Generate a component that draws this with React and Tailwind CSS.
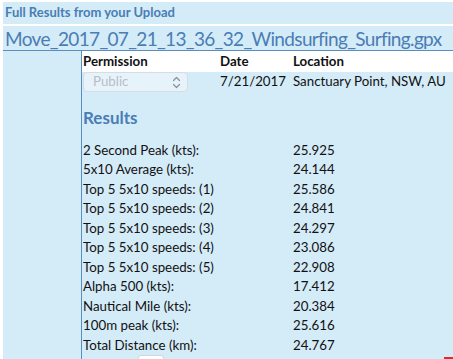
import React from 'react';

const results = [
    ['2 Second Peak (kts):', '25.925'],
    ['5x10 Average (kts):', '24.144'],
    ['Top 5 5x10 speeds: (1)', '25.586'],
    ['Top 5 5x10 speeds: (2)', '24.841'],
    ['Top 5 5x10 speeds: (3)', '24.297'],
    ['Top 5 5x10 speeds: (4)', '23.086'],
    ['Top 5 5x10 speeds: (5)', '22.908'],
    ['Alpha 500 (kts):', '17.412'],
    ['Nautical Mile (kts):', '20.384'],
    ['100m peak (kts):', '25.616'],
    ['Total Distance (km):', '24.767'],
];

function Chevrons() {
    return (
        <svg width="9" height="13" viewBox="0 0 9 13" fill="none" stroke="#8a8f95" strokeWidth="1.2" strokeLinecap="round" strokeLinejoin="round">
            <path d="M1.5 4.5 L4.5 1.5 L7.5 4.5" />
            <path d="M1.5 8.5 L4.5 11.5 L7.5 8.5" />
        </svg>
    );
}

export default function App() {
    return (
        <div className="w-[453px] h-[359px] overflow-hidden bg-white pt-[2px] pl-[3px] font-['Lato','Liberation_Sans',sans-serif] text-[13.3px] text-[#111]">
            <div className="h-[22px] bg-[#d4ebf8] pl-[2px] flex items-center text-[13px] font-bold text-[#4a7db4]">
                Full Results from your Upload
            </div>
            <div className="mt-[2px] h-[25px] bg-[#d4ebf8] border-b border-[#5a8dc2] pl-[2px] flex items-center text-[19px] tracking-[-0.65px] leading-none text-[#4a7db4] whitespace-nowrap">
                Move_2017_07_21_13_36_32_Windsurfing_Surfing.gpx
            </div>
            <div className="flex bg-[#d4ebf8] h-[320px]">
                <div className="w-[78px] shrink-0" />
                <div className="flex-1 border-l border-[#5a8dc2] flex flex-col">
                    <div className="h-[21px] bg-white flex items-center font-bold">
                        <div className="w-[138px] pl-[1px]">Permission</div>
                        <div className="w-[73px]">Date</div>
                        <div>Location</div>
                    </div>
                    <div className="h-[24px] flex items-start">
                        <div className="w-[138px] pl-[1px]">
                            <div className="w-[105px] h-[20px] rounded-[4px] border border-[#d6dde3] bg-[#e6f3fb] flex items-center justify-between pl-[9px] pr-[6px] text-[#b9bec3]">
                                <span>Public</span>
                                <Chevrons />
                            </div>
                        </div>
                        <div className="w-[73px] h-[20px] flex items-center">7/21/2017</div>
                        <div className="h-[20px] flex items-center">Sanctuary Point, NSW, AU</div>
                    </div>
                    <div className="mt-[11px] h-[22px] pl-[1px] flex items-center text-[17px] font-bold text-[#4a7db4]">
                        Results
                    </div>
                    <div className="mt-[12px] flex flex-col">
                        {results.map(([label, value]) => (
                            <div key={label} className="h-[19.5px] flex items-center">
                                <div className="w-[211px] pl-[1px]">{label}</div>
                                <div>{value}</div>
                            </div>
                        ))}
                    </div>
                    <div className="flex justify-between items-start mt-[-1px]">
                        <div className="ml-[56px] w-[26px] h-[8px] bg-white border border-[#d0d6dc] rounded-t-[3px]" />
                        <div className="mt-[2px] w-[9px] h-[3px] bg-[#e8262b]" />
                    </div>
                </div>
            </div>
        </div>
    );
}
